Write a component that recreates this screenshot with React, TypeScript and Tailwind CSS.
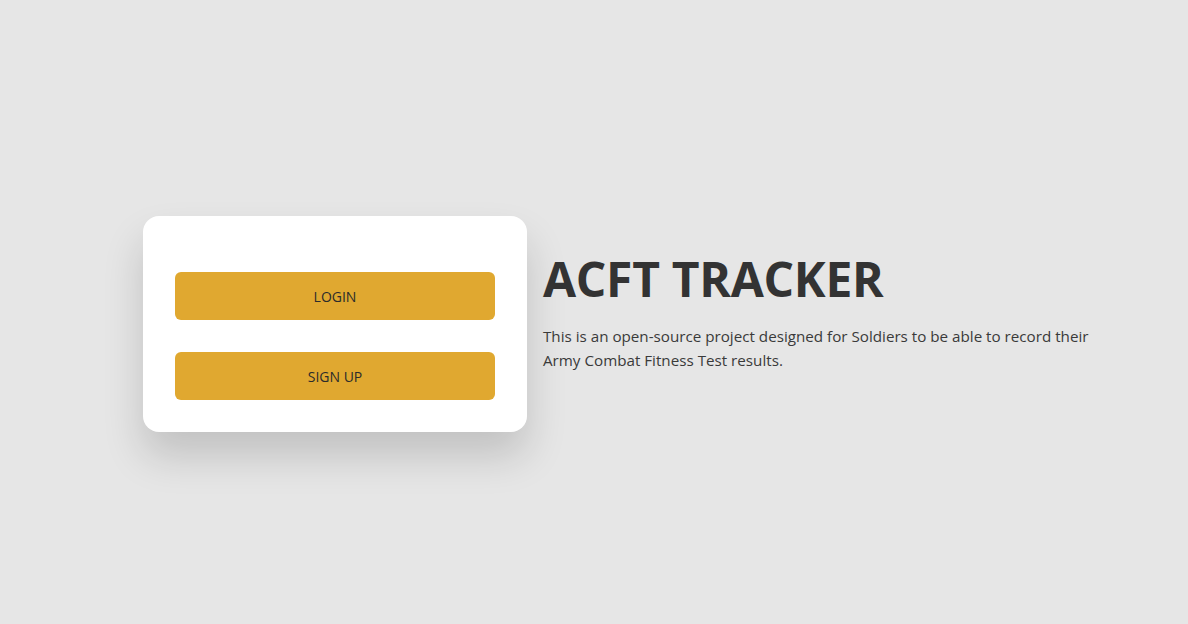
export default function App() {
  return (
    <div
      className="w-[1188px] h-[624px] bg-[#e6e6e6] flex"
      style={{ fontFamily: '"Open Sans", "Noto Sans", sans-serif' }}
    >
      <div className="pl-[143px] pt-[216px] flex items-start gap-4">
        <div className="w-[384px] h-[216px] bg-white rounded-2xl shadow-[0_24px_40px_rgba(0,0,0,0.16)] px-8 pt-14 pb-8 flex flex-col gap-8">
          <button className="h-12 w-full rounded-md bg-[#e0a830] text-[14px] text-[#2b2b2b]">LOGIN</button>
          <button className="h-12 w-full rounded-md bg-[#e0a830] text-[14px] text-[#2b2b2b]">SIGN UP</button>
        </div>
        <div className="pt-[33px] text-[#333333]">
          <h1 className="text-[48px] font-bold leading-[60px] tracking-[-0.3px]">ACFT TRACKER</h1>
          <p className="mt-[15px] text-[15.2px] leading-6 text-[#3a3a3a]">
            This is an open-source project designed for Soldiers to be able to record their
            <br />
            Army Combat Fitness Test results.
          </p>
        </div>
      </div>
    </div>
  );
}
